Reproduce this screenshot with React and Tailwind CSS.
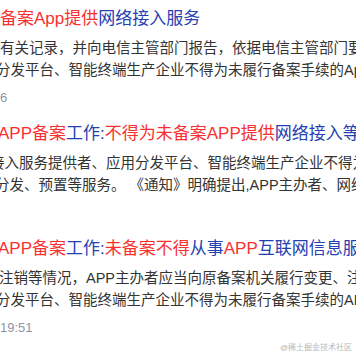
const red = "text-[#f73131]";
const blue = "text-[#2440b3]";

const results = [
  {
    title: [
      ["备案App提供", red],
      ["网络接入服务", blue],
    ],
    titleShift: "ml-0",
    lines: [
      ["有关记录，并向电信主管部门报告，依据电信主管部门要求", "ml-0"],
      ["分发平台、智能终端生产企业不得为未履行备案手续的App", "-ml-[4px]"],
    ],
    date: "6",
  },
  {
    title: [
      ["APP备案", red],
      ["工作:", blue],
      ["不得为未备案APP提供", red],
      ["网络接入等", blue],
    ],
    titleShift: "-ml-[2px]",
    lines: [
      ["接入服务提供者、应用分发平台、智能终端生产企业不得为", "-ml-[10px]"],
      ["分发、预置等服务。 《通知》明确提出,APP主办者、网络接入", "-ml-[5px]"],
    ],
    date: "",
  },
  {
    title: [
      ["APP备案", red],
      ["工作:", blue],
      ["未备案不得", red],
      ["从事", blue],
      ["APP", red],
      ["互联网信息服务", blue],
    ],
    titleShift: "-ml-[2px]",
    lines: [
      ["注销等情况，APP主办者应当向原备案机关履行变更、注销", "-ml-[1px]"],
      ["分发平台、智能终端生产企业不得为未履行备案手续的APP", "-ml-[4px]"],
    ],
    date: "19:51",
  },
];

function Result({ item }) {
  return (
    <div className="mb-[12px]">
      <div className={`h-[26px] whitespace-nowrap text-[17px] leading-[26px] ${item.titleShift}`}>
        {item.title.map(([text, color], i) => (
          <span key={i} className={color}>
            {text}
          </span>
        ))}
      </div>
      <div className="mt-[5px] text-[14.5px] leading-[22px] text-[#333333]">
        {item.lines.map(([text, shift], i) => (
          <div key={i} className={`whitespace-nowrap ${shift}`}>
            {text}
          </div>
        ))}
      </div>
      <div className="mt-[6px] h-[22px] whitespace-nowrap text-[13px] leading-[22px] text-[#9195a3]">
        {item.date}
      </div>
    </div>
  );
}

export default function App() {
  return (
    <div
      className="relative h-[356px] w-[356px] overflow-hidden bg-white pt-[6px]"
      style={{ fontFamily: '"Liberation Sans", "Noto Sans CJK SC", sans-serif' }}
    >
      {results.map((item, i) => (
        <Result key={i} item={item} />
      ))}
      <div className="absolute bottom-[3px] right-[4px] text-[8px] leading-[10px] text-[#b8b8b8]">
        @稀土掘金技术社区
      </div>
    </div>
  );
}
